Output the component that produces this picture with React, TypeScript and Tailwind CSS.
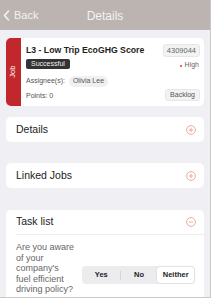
import React from "react";

function CircleIcon({ minus = false }: { minus?: boolean }) {
  return (
    <svg width="10" height="10" viewBox="0 0 10 10" fill="none" stroke="#eaa492" strokeWidth="0.9">
      <circle cx="5" cy="5" r="4.4" />
      <line x1="2.8" y1="5" x2="7.2" y2="5" />
      {!minus && <line x1="5" y1="2.8" x2="5" y2="7.2" />}
    </svg>
  );
}

function Section({ title }: { title: string }) {
  return (
    <div className="flex h-[25px] items-center justify-between rounded-[5px] bg-white pl-[10px] pr-[8px]">
      <span className="text-[10.5px] text-[#222]">{title}</span>
      <CircleIcon />
    </div>
  );
}

export default function App() {
  return (
    <div
      className="h-[298px] w-[211px] overflow-hidden border-r border-b border-[#c9c9cc] bg-[#f0eff4]"
      style={{ fontFamily: '"Liberation Sans", Arial, sans-serif' }}
    >
      {/* Nav bar */}
      <div className="relative flex h-[30px] items-center bg-[#bbb4b1] text-[#f4f2f2]">
        <div className="flex items-center gap-[4px] pl-[3px] pt-[1px]">
          <svg width="7" height="11" viewBox="0 0 7 11" fill="none" stroke="#f4f2f2" strokeWidth="1.6" strokeLinecap="round" strokeLinejoin="round">
            <polyline points="5.5,1 1.5,5.5 5.5,10" />
          </svg>
          <span className="text-[11px]">Back</span>
        </div>
        <span className="absolute left-1/2 -translate-x-1/2 pt-[1px] text-[12px]">Details</span>
      </div>

      <div className="flex flex-col px-[6px] pt-[8px]">
        {/* Job card */}
        <div className="flex h-[68px] overflow-hidden rounded-[5px] bg-white">
          <div className="flex w-[15px] items-center justify-center bg-[#c1272d]">
            <span className="-rotate-90 text-[7.5px] text-white">Job</span>
          </div>
          <div className="flex flex-1 flex-col pl-[5px] pr-[4px] pt-[6px]">
            <div className="flex h-[13px] items-center justify-between">
              <span className="whitespace-nowrap text-[8.7px] font-bold text-[#222]">L3 - Low Trip EcoGHG Score</span>
              <span className="flex h-[13px] items-center rounded-[3px] border border-[#e6e6e6] bg-[#f3f3f3] px-[3px] text-[7.5px] text-[#666]">4309044</span>
            </div>
            <div className="mt-[2px] flex h-[10px] items-center justify-between">
              <span className="flex h-[10px] items-center rounded-[2px] bg-[#333] px-[5px] text-[7px] text-[#eee]">Successful</span>
              <span className="mt-[3px] flex items-center gap-[3px] pr-[1px] text-[7px] text-[#666]">
                <span className="h-[2px] w-[2px] rounded-full bg-[#d33]" />
                High
              </span>
            </div>
            <div className="mt-[7px] flex h-[10px] items-center gap-[4px]">
              <span className="text-[7px] text-[#555]">Assignee(s):</span>
              <span className="flex h-[11px] items-center rounded-full bg-[#f0f0f3] px-[4px] text-[7px] text-[#555]">Olivia Lee</span>
            </div>
            <div className="mt-[3px] flex h-[12px] items-center justify-between">
              <span className="pt-[2px] text-[7px] text-[#555]">Points: 0</span>
              <span className="flex h-[12px] items-center rounded-[3px] border border-[#e6e6e6] bg-[#f3f3f3] px-[4px] text-[7px] text-[#555]">Backlog</span>
            </div>
          </div>
        </div>

        <div className="mt-[11px]">
          <Section title="Details" />
        </div>
        <div className="mt-[21px]">
          <Section title="Linked Jobs" />
        </div>

        {/* Task list */}
        <div className="mt-[22px] rounded-[5px] bg-white">
          <div className="flex h-[24px] items-center justify-between pl-[10px] pr-[8px]">
            <span className="text-[10.5px] text-[#222]">Task list</span>
            <CircleIcon minus />
          </div>
          <div className="ml-[10px] h-px bg-[#eeeeee]" />
          <div className="flex items-start justify-between pl-[10px] pr-[9px] pt-[7px] pb-[8px]">
            <p className="text-[9px] leading-[10.5px] text-[#666]">
              Are you aware
              <br />
              of your
              <br />
              company's
              <br />
              fuel efficient
              <br />
              driving policy?
            </p>
            <div className="mt-[24px] flex h-[18px] w-[113px] items-center rounded-[4px] bg-[#ececee] p-[1px] text-[7.5px] font-bold text-[#222]">
              <span className="flex flex-1 items-center justify-center">Yes</span>
              <span className="h-[9px] w-px bg-[#d6d6d8]" />
              <span className="flex flex-1 items-center justify-center">No</span>
              <span className="flex h-full flex-1 items-center justify-center rounded-[3px] bg-white shadow-[0_0_2px_rgba(0,0,0,0.15)]">Neither</span>
            </div>
          </div>
        </div>
      </div>
    </div>
  );
}
